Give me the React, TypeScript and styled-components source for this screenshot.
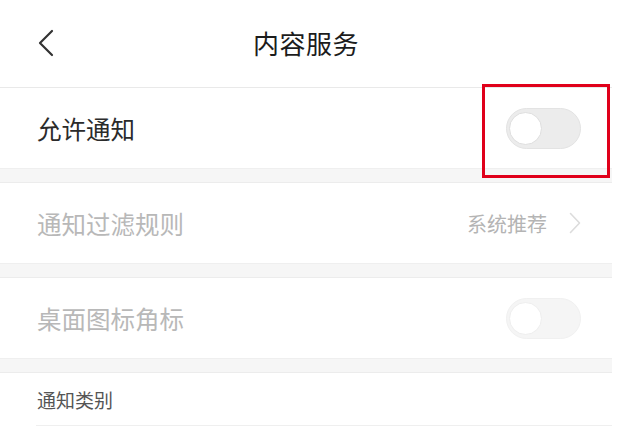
import styled, { createGlobalStyle } from 'styled-components';

const GlobalStyle = createGlobalStyle`
  html, body {
    margin: 0;
    padding: 0;
    background: #ffffff;
  }
  body {
    font-family: 'Noto Sans CJK SC', 'Noto Sans', sans-serif;
  }
`;

type SwitchProps = { disabled?: boolean };

const Switch = ({ disabled }: SwitchProps) => (
  <STrack $disabled={disabled}>
    <SKnob />
  </STrack>
);

export default function App() {
  return (
    <SPage>
      <GlobalStyle />
      <SHeader>
        <SBack aria-label="返回">
          <svg width="18" height="28" viewBox="0 0 18 28">
            <path d="M15 2 L3 14 L15 26" fill="none" stroke="#333" strokeWidth="2.2" strokeLinecap="round" strokeLinejoin="round" />
          </svg>
        </SBack>
        <STitle>内容服务</STitle>
      </SHeader>

      <SRow>
        <SLabel>允许通知</SLabel>
        <SHighlightWrap>
          <Switch />
          <SHighlight />
        </SHighlightWrap>
      </SRow>

      <SGap />

      <SRow>
        <SLabel $muted>通知过滤规则</SLabel>
        <SValue>
          系统推荐
          <svg width="12" height="22" viewBox="0 0 12 22">
            <path d="M1.5 1.5 L10.5 11 L1.5 20.5" fill="none" stroke="#dcdcdc" strokeWidth="1.6" strokeLinecap="round" strokeLinejoin="round" />
          </svg>
        </SValue>
      </SRow>

      <SGap />

      <SRow>
        <SLabel $muted>桌面图标角标</SLabel>
        <Switch disabled />
      </SRow>

      <SGap />

      <SSection>
        <SSectionTitle>通知类别</SSectionTitle>
      </SSection>
    </SPage>
  );
}

const SPage = styled.div`
  width: 612px;
  background: #fff;
`;

const SHeader = styled.header`
  position: relative;
  height: 87px;
  display: flex;
  align-items: center;
  justify-content: center;
  border-bottom: 1px solid #e9e9e9;
`;

const SBack = styled.div`
  position: absolute;
  left: 37px;
  top: 29px;
  display: flex;
`;

const STitle = styled.h1`
  margin: 0 0 2px;
  font-size: 26px;
  font-weight: 400;
  color: #1c1c1c;
  letter-spacing: 0.5px;
`;

const SRow = styled.div`
  height: 80px;
  display: flex;
  align-items: center;
  justify-content: space-between;
  padding: 0 31px 0 37px;
  box-sizing: border-box;
`;

const SLabel = styled.span<{ $muted?: boolean }>`
  font-size: 24.5px;
  color: ${(p) => (p.$muted ? '#b8b8b8' : '#2b2b2b')};
`;

const SValue = styled.span`
  display: flex;
  align-items: center;
  gap: 22px;
  font-size: 20px;
  color: #b4b4b4;
`;

const SGap = styled.div`
  height: 15px;
  box-sizing: border-box;
  background: #f6f6f6;
  border-top: 1px solid #efefef;
  border-bottom: 1px solid #ececec;
`;

const SHighlightWrap = styled.div`
  position: relative;
  display: flex;
`;

const SHighlight = styled.div`
  position: absolute;
  left: -24px;
  right: -29px;
  top: -24px;
  bottom: -29px;
  border: 3px solid #e0001a;
  pointer-events: none;
`;

const STrack = styled.div<{ $disabled?: boolean }>`
  position: relative;
  width: 75px;
  height: 41px;
  box-sizing: border-box;
  border-radius: 21px;
  background: #ececec;
  border: 1px solid #e3e3e3;
  opacity: ${(p) => (p.$disabled ? 0.5 : 1)};
`;

const SKnob = styled.div`
  position: absolute;
  left: 2px;
  top: 3px;
  width: 33px;
  height: 33px;
  box-sizing: border-box;
  border-radius: 50%;
  background: #fff;
  border: 1px solid #dedede;
`;

const SSection = styled.div`
  height: 53px;
  margin-left: 36px;
  box-sizing: border-box;
  border-bottom: 1px solid #efefef;
  display: flex;
  align-items: center;
`;

const SSectionTitle = styled.span`
  margin-left: 1px;
  font-size: 19px;
  color: #555;
`;
